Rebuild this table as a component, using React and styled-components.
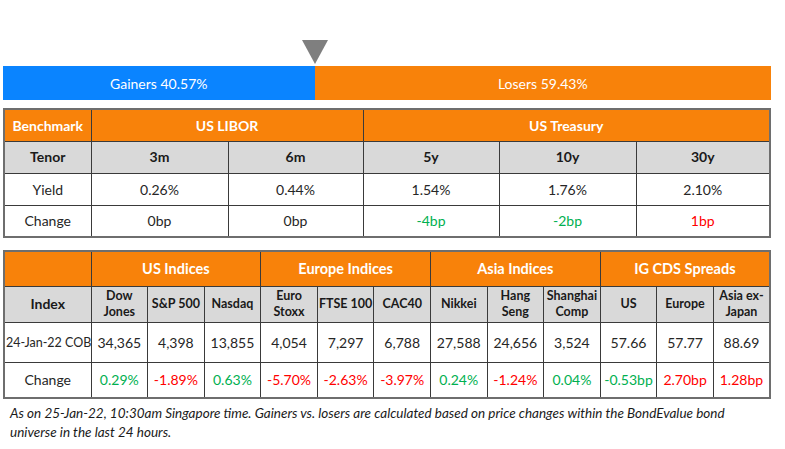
import React from "react";
import styled, { createGlobalStyle } from "styled-components";

const GlobalStyle = createGlobalStyle`
  body {
    margin: 0;
    background: #ffffff;
    font-family: Lato, "Open Sans", sans-serif;
    color: #262626;
  }
`;

const gainers = 40.57;

const libor = [
  { tenor: "3m", yieldVal: "0.26%", change: "0bp", tone: "flat" },
  { tenor: "6m", yieldVal: "0.44%", change: "0bp", tone: "flat" },
];

const treasury = [
  { tenor: "5y", yieldVal: "1.54%", change: "-4bp", tone: "up" },
  { tenor: "10y", yieldVal: "1.76%", change: "-2bp", tone: "up" },
  { tenor: "30y", yieldVal: "2.10%", change: "1bp", tone: "down" },
];

const groups = [
  {
    title: "US Indices",
    items: [
      { name: ["Dow", "Jones"], value: "34,365", change: "0.29%", tone: "up" },
      { name: ["S&P 500"], value: "4,398", change: "-1.89%", tone: "down" },
      { name: ["Nasdaq"], value: "13,855", change: "0.63%", tone: "up" },
    ],
  },
  {
    title: "Europe Indices",
    items: [
      { name: ["Euro", "Stoxx"], value: "4,054", change: "-5.70%", tone: "down" },
      { name: ["FTSE 100"], value: "7,297", change: "-2.63%", tone: "down" },
      { name: ["CAC40"], value: "6,788", change: "-3.97%", tone: "down" },
    ],
  },
  {
    title: "Asia Indices",
    items: [
      { name: ["Nikkei"], value: "27,588", change: "0.24%", tone: "up" },
      { name: ["Hang", "Seng"], value: "24,656", change: "-1.24%", tone: "down" },
      { name: ["Shanghai", "Comp"], value: "3,524", change: "0.04%", tone: "up" },
    ],
  },
  {
    title: "IG CDS Spreads",
    items: [
      { name: ["US"], value: "57.66", change: "-0.53bp", tone: "up" },
      { name: ["Europe"], value: "57.77", change: "2.70bp", tone: "down" },
      { name: ["Asia ex-", "Japan"], value: "88.69", change: "1.28bp", tone: "down" },
    ],
  },
];

const toneColor = {
  up: "#00b050",
  down: "#ff0000",
  flat: "#262626",
};

const App = () => {
  const allItems = groups.flatMap((g) => g.items);

  return (
    <>
      <GlobalStyle />
      <Page>
        <MarkerRow style={{ paddingLeft: `calc(${gainers}% - 13px)` }}>
          <Marker />
        </MarkerRow>
        <SplitBar>
          <BarPart $color="#0a84ff" style={{ width: `${gainers}%` }}>
            Gainers {gainers}%
          </BarPart>
          <BarPart $color="#f8820a" style={{ flex: 1 }}>
            Losers 59.43%
          </BarPart>
        </SplitBar>

        <Table>
          <colgroup>
            <col style={{ width: 87 }} />
            <col style={{ width: 137 }} />
            <col style={{ width: 135 }} />
            <col style={{ width: 136 }} />
            <col style={{ width: 137 }} />
            <col />
          </colgroup>
          <tbody>
            <Row $h={32}>
              <HeadCell>Benchmark</HeadCell>
              <HeadCell colSpan={2}>US LIBOR</HeadCell>
              <HeadCell colSpan={3}>US Treasury</HeadCell>
            </Row>
            <Row $h={32}>
              <SubCell>Tenor</SubCell>
              {[...libor, ...treasury].map((t) => (
                <SubCell key={t.tenor}>{t.tenor}</SubCell>
              ))}
            </Row>
            <Row $h={32}>
              <Cell>Yield</Cell>
              {[...libor, ...treasury].map((t) => (
                <Cell key={t.tenor}>{t.yieldVal}</Cell>
              ))}
            </Row>
            <Row $h={32}>
              <Cell>Change</Cell>
              {[...libor, ...treasury].map((t) => (
                <Cell key={t.tenor} $tone={t.tone}>
                  {t.change}
                </Cell>
              ))}
            </Row>
          </tbody>
        </Table>

        <IndexTable>
          <colgroup>
            <col style={{ width: 87 }} />
            {allItems.map((_, i) => (
              <col key={i} />
            ))}
          </colgroup>
          <tbody>
            <Row $h={35}>
              <HeadCell $big />
              {groups.map((g) => (
                <HeadCell $big key={g.title} colSpan={3}>
                  {g.title}
                </HeadCell>
              ))}
            </Row>
            <Row $h={36}>
              <SubCell>Index</SubCell>
              {allItems.map((it) => (
                <SubCell key={it.name.join(" ")} $tight>
                  {it.name.map((n, i) => (
                    <span key={i}>
                      {i > 0 && <br />}
                      {n}
                    </span>
                  ))}
                </SubCell>
              ))}
            </Row>
            <Row $h={40}>
              <Cell $small>24-Jan-22 COB</Cell>
              {allItems.map((it) => (
                <Cell key={it.name.join(" ")}>{it.value}</Cell>
              ))}
            </Row>
            <Row $h={36}>
              <Cell>Change</Cell>
              {allItems.map((it) => (
                <Cell key={it.name.join(" ")} $tone={it.tone}>
                  {it.change}
                </Cell>
              ))}
            </Row>
          </tbody>
        </IndexTable>

        <Footnote>
          As on 25-Jan-22, 10:30am Singapore time. Gainers vs. losers are
          calculated based on price changes within the BondEvalue bond
          universe in the last 24 hours.
        </Footnote>
      </Page>
    </>
  );
};

const Page = styled.div`
  width: 785px;
  height: 449px;
  padding: 40px 14px 0 3px;
  box-sizing: border-box;
  overflow: hidden;
`;

const MarkerRow = styled.div`
  display: flex;
  height: 26px;
`;

const Marker = styled.div`
  width: 0;
  height: 0;
  border-left: 13.5px solid transparent;
  border-right: 13.5px solid transparent;
  border-top: 24px solid #7f7f7f;
`;

const SplitBar = styled.div`
  display: flex;
  height: 34px;
  width: 768px;
`;

const BarPart = styled.div`
  display: flex;
  align-items: center;
  justify-content: center;
  background: ${(p) => p.$color};
  color: #ffffff;
  font-size: 14px;
`;

const Table = styled.table`
  width: 768px;
  margin-top: 8px;
  border-collapse: collapse;
  table-layout: fixed;
  border: 2px solid #6e6e6e;
`;

const IndexTable = styled(Table)`
  margin-top: 12px;
`;

const Row = styled.tr`
  height: ${(p) => p.$h}px;
`;

const BaseCell = styled.td`
  border: 1px solid #3a3a3a;
  text-align: center;
  vertical-align: middle;
  padding: 0 1px;
  white-space: nowrap;
  overflow: hidden;
`;

const HeadCell = styled(BaseCell)`
  background: #f8820a;
  color: #ffffff;
  font-weight: 700;
  font-size: ${(p) => (p.$big ? 14.5 : 14)}px;
`;

const SubCell = styled(BaseCell)`
  background: #d9d9d9;
  color: #1a1a1a;
  font-weight: 700;
  font-size: ${(p) => (p.$tight ? 12.5 : 14)}px;
  line-height: ${(p) => (p.$tight ? 16 : 18)}px;
`;

const Cell = styled(BaseCell)`
  background: #ffffff;
  color: ${(p) => toneColor[p.$tone] || "#262626"};
  font-size: ${(p) => (p.$small ? 12.5 : 14)}px;
`;

const Footnote = styled.p`
  margin: 5px 0 0 7px;
  width: 740px;
  font-style: italic;
  font-size: 13.5px;
  line-height: 19px;
  color: #1a1a1a;
`;

export default App;
